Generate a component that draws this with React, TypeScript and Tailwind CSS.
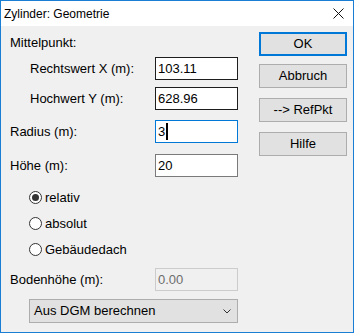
import React from "react"

const font = { fontFamily: '"Liberation Sans", Arial, sans-serif' }

function Field({
  value,
  border = "border-[#1e1e1e]",
  disabled = false,
  caret = false,
}: {
  value: string
  border?: string
  disabled?: boolean
  caret?: boolean
}) {
  return (
    <div
      className={`flex h-[23px] w-[83px] items-center border pl-[2px] ${border} ${
        disabled ? "bg-[#f0f0f0] text-[#6d6d6d]" : "bg-white text-black"
      }`}
    >
      <span>{value}</span>
      {caret && <span className="ml-[1px] h-[17px] w-[2px] bg-black" />}
    </div>
  )
}

function Radio({ label, checked = false }: { label: string; checked?: boolean }) {
  return (
    <div className="flex h-[23px] items-center pl-[19px]">
      <span className="flex h-[13px] w-[13px] items-center justify-center rounded-full border border-[#333333] bg-white">
        {checked && <span className="h-[7px] w-[7px] rounded-full bg-[#333333]" />}
      </span>
      <span className="ml-[3px]">{label}</span>
    </div>
  )
}

function Button({ label, primary = false }: { label: string; primary?: boolean }) {
  return (
    <div
      className={`flex h-[24px] w-[88px] items-center justify-center bg-[#e1e1e1] ${
        primary ? "border-2 border-[#0078d7]" : "border border-[#adadad]"
      }`}
    >
      {label}
    </div>
  )
}

export default function App() {
  return (
    <div
      className="flex h-[333px] w-[354px] flex-col border border-[#1a7fd4] bg-[#f0f0f0] text-[13px] text-black"
      style={font}
    >
      {/* title bar */}
      <div className="flex h-[25px] items-center justify-between bg-white pl-[3px] pr-[9px] text-[12px]">
        <span>Zylinder: Geometrie</span>
        <svg width="11" height="11" viewBox="0 0 11 11">
          <path d="M0.5 0.5 L10.5 10.5 M10.5 0.5 L0.5 10.5" stroke="#111" strokeWidth="1" />
        </svg>
      </div>

      <div className="flex flex-1">
        {/* left column */}
        <div className="flex w-[237px] flex-col pl-[9px]">
          <div className="mt-[5px] flex h-[23px] items-center">Mittelpunkt:</div>

          <div className="mt-[3px] flex h-[23px] items-center justify-between">
            <span className="pl-[20px]">Rechtswert X (m):</span>
            <Field value="103.11" />
          </div>

          <div className="mt-[7px] flex h-[23px] items-center justify-between">
            <span className="pl-[20px]">Hochwert Y (m):</span>
            <Field value="628.96" />
          </div>

          <div className="mt-[10px] flex h-[23px] items-center justify-between">
            <span>Radius (m):</span>
            <Field value="3" border="border-[#0078d7]" caret />
          </div>

          <div className="mt-[11px] flex h-[23px] items-center justify-between">
            <span>Höhe (m):</span>
            <Field value="20" border="border-[#7a7a7a]" />
          </div>

          <div className="mt-[9px]">
            <Radio label="relativ" checked />
          </div>
          <div className="mt-[3px]">
            <Radio label="absolut" />
          </div>
          <div className="mt-[3px]">
            <Radio label="Gebäudedach" />
          </div>

          <div className="mt-[7px] flex h-[23px] items-center justify-between">
            <span>Bodenhöhe (m):</span>
            <Field value="0.00" border="border-[#cccccc]" disabled />
          </div>

          <div className="ml-[19px] mt-[8px] flex h-[24px] w-[209px] items-center justify-between border border-[#adadad] bg-[#e1e1e1] pl-[4px] pr-[6px]">
            <span>Aus DGM berechnen</span>
            <svg width="8" height="5" viewBox="0 0 8 5">
              <path d="M0.5 0.5 L4 4 L7.5 0.5" stroke="#333" strokeWidth="1" fill="none" />
            </svg>
          </div>
        </div>

        {/* right column */}
        <div className="ml-auto mr-[6px] mt-[6px] flex flex-col gap-[8px]">
          <Button label="OK" primary />
          <div className="flex flex-col gap-[10px]">
            <Button label="Abbruch" />
            <Button label="--> RefPkt" />
            <Button label="Hilfe" />
          </div>
        </div>
      </div>
    </div>
  )
}
